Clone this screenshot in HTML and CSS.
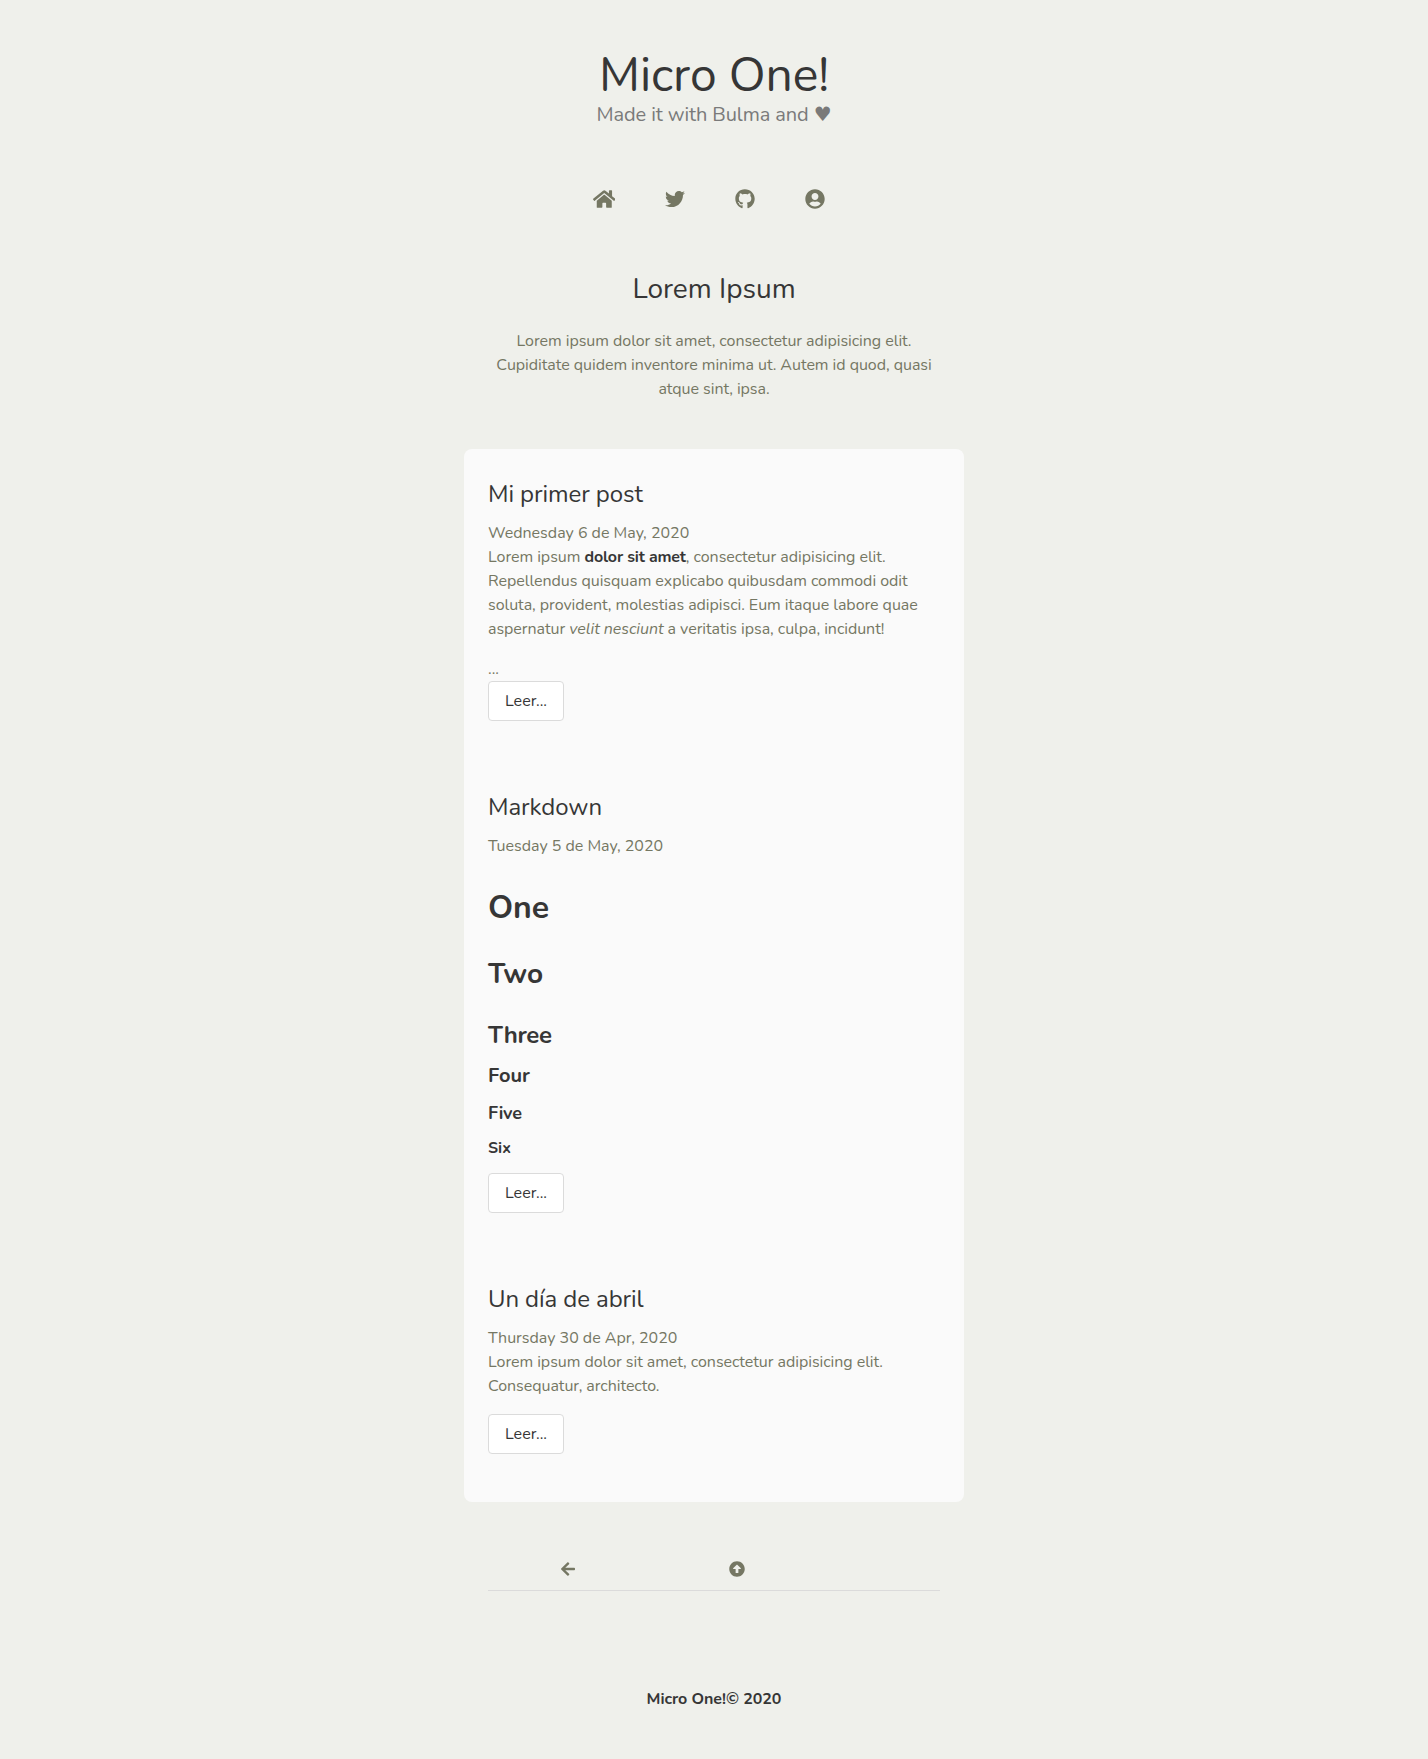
FILE: index.html
```
<!DOCTYPE html>
<html lang="es">
<head>
<meta charset="utf-8">
<title>Micro One!</title>
<link rel="stylesheet" href="styles.css">
</head>
<body>
<header class="hero">
  <h1 class="hero-title">Micro One!</h1>
  <h2 class="hero-subtitle">Made it with Bulma and ♥</h2>
</header>
<nav class="social">
  <a href="#" aria-label="Home"><svg class="icon icon-wide" viewBox="0 0 576 512"><path d="M280.37 148.26L96 300.11V464a16 16 0 0 0 16 16l112.06-.29a16 16 0 0 0 15.92-16V368a16 16 0 0 1 16-16h64a16 16 0 0 1 16 16v95.64a16 16 0 0 0 16 16.05L464 480a16 16 0 0 0 16-16V300L295.67 148.26a12.19 12.19 0 0 0-15.3 0zM571.6 251.47L488 182.56V44.05a12 12 0 0 0-12-12h-56a12 12 0 0 0-12 12v72.61L318.47 43a48 48 0 0 0-61 0L4.34 251.47a12 12 0 0 0-1.6 16.9l25.5 31A12 12 0 0 0 45.15 301l235.22-193.74a12.19 12.19 0 0 1 15.3 0L530.9 301a12 12 0 0 0 16.9-1.6l25.5-31a12 12 0 0 0-1.7-16.93z"/></svg></a>
  <a href="#" aria-label="Twitter"><svg class="icon" viewBox="0 0 512 512"><path d="M459.37 151.716c.325 4.548.325 9.097.325 13.645 0 138.72-105.583 298.558-298.558 298.558-59.452 0-114.68-17.219-161.137-47.106 8.447.974 16.568 1.299 25.34 1.299 49.055 0 94.213-16.568 130.274-44.832-46.132-.975-84.792-31.188-98.112-72.772 6.498.974 12.995 1.624 19.818 1.624 9.421 0 18.843-1.3 27.614-3.573-48.081-9.747-84.143-51.98-84.143-102.985v-1.299c13.969 7.797 30.214 12.67 47.431 13.319-28.264-18.843-46.781-51.005-46.781-87.391 0-19.492 5.197-37.36 14.294-52.954 51.655 63.675 129.3 105.258 216.365 109.807-1.624-7.797-2.599-15.918-2.599-24.04 0-57.828 46.782-104.934 104.934-104.934 30.213 0 57.502 12.67 76.67 33.137 23.715-4.548 46.456-13.32 66.599-25.34-7.798 24.366-24.366 44.833-46.132 57.827 21.117-2.273 41.584-8.122 60.426-16.243-14.292 20.791-32.161 39.308-52.628 54.253z"/></svg></a>
  <a href="#" aria-label="GitHub"><svg class="icon" viewBox="0 0 496 512"><path d="M165.900 397.400c0 2-2.300 3.600-5.200 3.600-3.300.3-5.600-1.300-5.600-3.600 0-2 2.300-3.600 5.200-3.600 3-.3 5.600 1.300 5.600 3.600zM134.800 392.900c-.7 2 1.300 4.300 4.300 4.900 2.600 1 5.600 0 6.200-2s-1.300-4.300-4.300-5.200c-2.600-.7-5.500.3-6.200 2.300zM244.800 8C106.100 8 0 113.300 0 252c0 110.900 69.800 205.800 169.500 239.200 12.800 2.300 17.300-5.600 17.300-12.100 0-6.200-.3-40.400-.3-61.400 0 0-70 15-84.700-29.800 0 0-11.400-29.100-27.800-36.600 0 0-22.900-15.700 1.600-15.400 0 0 24.900 2 38.600 25.800 21.900 38.600 58.600 27.500 72.900 20.900 2.300-16 8.800-27.100 16-33.700-55.900-6.200-112.300-14.300-112.300-110.500 0-27.500 7.600-41.300 23.600-58.900-2.600-6.500-11.100-33.300 2.600-67.900 20.900-6.500 69 27 69 27 20-5.600 41.500-8.500 62.800-8.500s42.800 2.900 62.800 8.500c0 0 48.100-33.600 69-27 13.700 34.700 5.200 61.400 2.600 67.900 16 17.700 25.800 31.500 25.800 58.900 0 96.500-58.900 104.200-114.800 110.500 9.200 7.900 17 22.900 17 46.400 0 33.700-.3 75.400-.3 83.600 0 6.500 4.600 14.400 17.300 12.100C428.200 457.800 496 362.900 496 252 496 113.300 383.500 8 244.800 8z"/></svg></a>
  <a href="#" aria-label="About"><svg class="icon" viewBox="0 0 496 512"><path d="M248 8C111 8 0 119 0 256s111 248 248 248 248-111 248-248S385 8 248 8zm0 96c48.600 0 88 39.400 88 88s-39.400 88-88 88-88-39.400-88-88 39.400-88 88-88zm0 344c-58.700 0-111.300-26.600-146.500-68.200 18.800-35.400 55.600-59.800 98.500-59.800 2.400 0 4.800.4 7.100 1.100 13 4.200 26.600 6.900 40.900 6.900 14.300 0 28-2.700 40.900-6.900 2.300-.7 4.700-1.100 7.100-1.100 42.900 0 79.700 24.400 98.500 59.800C359.300 421.400 306.700 448 248 448z"/></svg></a>
</nav>
<section class="intro">
  <h3 class="intro-title">Lorem Ipsum</h3>
  <p class="copy">Lorem ipsum dolor sit amet, consectetur adipisicing elit. Cupiditate quidem inventore minima ut. Autem id quod, quasi atque sint, ipsa.</p>
</section>
<main class="posts">
  <article class="post">
    <h3 class="post-title">Mi primer post</h3>
    <p>Wednesday 6 de May, 2020</p>
    <div class="content">
      <p class="copy">Lorem ipsum <strong>dolor sit amet</strong>, consectetur adipisicing elit. Repellendus quisquam explicabo quibusdam commodi odit soluta, provident, molestias adipisci. Eum itaque labore quae aspernatur <em>velit nesciunt</em> a veritatis ipsa, culpa, incidunt!</p>
      <p class="more">...</p>
    </div>
    <a class="button" href="#">Leer...</a>
  </article>
  <article class="post">
    <h3 class="post-title">Markdown</h3>
    <p>Tuesday 5 de May, 2020</p>
    <div class="content headings">
      <h1>One</h1>
      <h2>Two</h2>
      <h3>Three</h3>
      <h4>Four</h4>
      <h5>Five</h5>
      <h6>Six</h6>
    </div>
    <a class="button" href="#">Leer...</a>
  </article>
  <article class="post">
    <h3 class="post-title">Un día de abril</h3>
    <p>Thursday 30 de Apr, 2020</p>
    <div class="content spaced">
      <p class="copy">Lorem ipsum dolor sit amet, consectetur adipisicing elit. Consequatur, architecto.</p>
    </div>
    <a class="button" href="#">Leer...</a>
  </article>
</main>
<nav class="pager">
  <a href="#" aria-label="Previous"><svg class="pager-icon pager-prev" viewBox="0 0 448 512"><path d="M257.500 445.100l-22.200 22.200c-9.400 9.400-24.600 9.400-33.900 0L7 273c-9.400-9.400-9.400-24.600 0-33.900L201.400 44.700c9.400-9.400 24.600-9.400 33.900 0l22.200 22.200c9.500 9.500 9.300 25-.4 34.300L136.600 216H424c13.300 0 24 10.700 24 24v32c0 13.300-10.700 24-24 24H136.600l120.500 114.800c9.800 9.300 10 24.800.4 34.300z"/></svg></a>
  <a href="#" aria-label="Top"><svg class="pager-icon" viewBox="0 0 512 512"><path d="M8 256C8 119 119 8 256 8s248 111 248 248-111 248-248 248S8 393 8 256zm292 116V256h70.900c10.700 0 16.100-13 8.500-20.500L264.500 121.200c-4.700-4.700-12.200-4.700-16.900 0l-115 114.300c-7.600 7.600-2.200 20.500 8.500 20.500H212v116c0 6.600 5.400 12 12 12h64c6.600 0 12-5.400 12-12z"/></svg></a>
</nav>
<footer class="footer"><strong>Micro One!© 2020</strong></footer>
</body>
</html>
```
FILE: styles.css
```
* { box-sizing: border-box; margin: 0; padding: 0; }

body {
  background: #eff0eb;
  color: #757763;
  font: 400 16px/24px Nunito, Lato, "DejaVu Sans", sans-serif;
  min-height: 1759px;
}

a { color: inherit; text-decoration: none; }
strong { color: #363636; font-weight: 700; }
svg { display: block; fill: currentColor; }

.hero { padding-top: 48px; text-align: center; }
.hero-title { color: #363636; font-size: 48px; font-weight: 400; line-height: 54px; letter-spacing: -0.08px; }
.hero-subtitle {
  color: #7a7a7a;
  font-family: Nunito, "DejaVu Sans", sans-serif;
  font-size: 20px;
  font-weight: 400;
  line-height: 25px;
  letter-spacing: -0.09px;
}

.social { display: flex; justify-content: center; gap: 50px; margin-top: 62px; padding-right: 10px; }
.icon { width: 20px; height: 20px; }
.icon-wide { width: 22.5px; }

.intro { width: 452px; margin: 65px auto 0; text-align: center; }
.intro-title { color: #363636; font-size: 28px; font-weight: 400; line-height: 31.5px; margin-bottom: 23px; }

.copy { letter-spacing: -0.045px; }
.copy strong { letter-spacing: -0.16px; }

.posts {
  width: 500px;
  margin: 48.5px auto 0;
  padding: 32px 24px 48px;
  background: #fafafa;
  border-radius: 8px;
}
.post + .post { margin-top: 73px; }
.post-title { color: #363636; font-size: 24px; font-weight: 400; line-height: 27px; letter-spacing: -0.07px; margin-bottom: 13px; }
.content .more { margin-top: 16px; }
.spaced { margin-bottom: 16px; }

.headings { padding: 32px 0 16px; }
.headings > * { color: #363636; font-weight: 700; line-height: 1.125; }
.headings h1 { font-size: 32px; margin-bottom: 32.5px; }
.headings h2 { font-size: 28px; margin-bottom: 31.5px; }
.headings h3 { font-size: 24px; letter-spacing: -0.4px; margin-bottom: 16px; }
.headings h4 { font-size: 20px; margin-bottom: 16px; }
.headings h5 { font-size: 18px; letter-spacing: -0.2px; margin-bottom: 16px; }
.headings h6 { font-size: 16px; }

.button {
  display: block;
  width: 76px;
  height: 40px;
  padding: 7px 0;
  background: #fff;
  border: 1px solid #dbdbdb;
  border-radius: 4px;
  color: #363636;
  text-align: center;
}

.pager {
  display: flex;
  gap: 154px;
  width: 452px;
  margin: 59px auto 0;
  padding: 0 0 13px 73px;
  border-bottom: 1px solid #dbdbdb;
}
.pager-icon { width: 16px; height: 16px; }
.pager-prev { width: 14px; }

.footer { margin-top: 96px; text-align: center; letter-spacing: -0.05px; }
```
